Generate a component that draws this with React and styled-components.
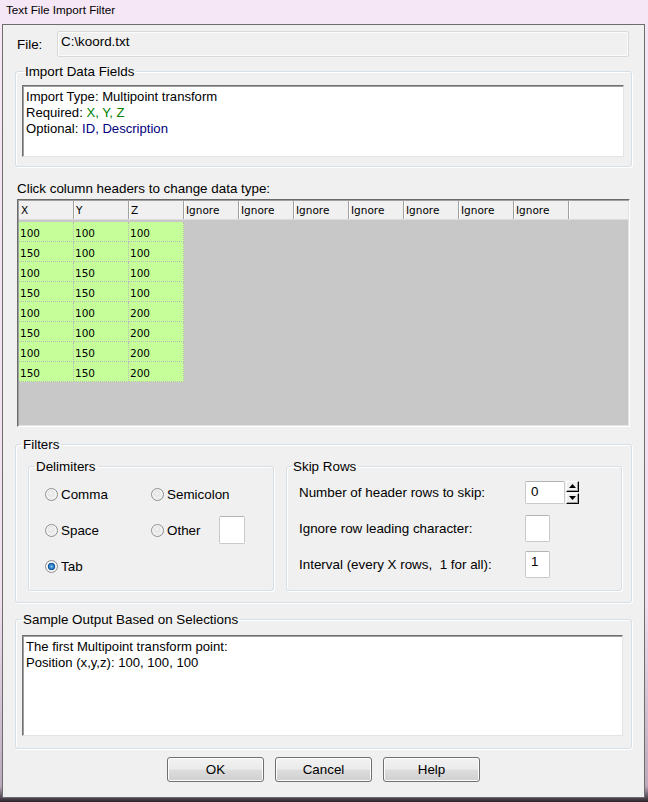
import React from 'react';
import styled, { createGlobalStyle } from 'styled-components';

const GlobalStyle = createGlobalStyle`
  html, body {
    margin: 0;
    padding: 0;
  }
  body {
    width: 648px;
    height: 802px;
    overflow: hidden;
    background: linear-gradient(to bottom, #f6e7f6 0%, #efdfef 75%, #bcaabc 98%, #2c242c 100%);
    font-family: "Liberation Sans", Arial, sans-serif;
    color: #000;
  }
`;

const Frame = styled.div`
  display: flex;
  flex-direction: column;
  padding-left: 2px;
`;

const TitleBar = styled.div`
  height: 24px;
  line-height: 20px;
  padding-left: 4px;
  font-size: 11.7px;
  color: #000;
`;

const Client = styled.div`
  box-sizing: border-box;
  width: 643px;
  height: 774px;
  border: 1px solid #6d6d6d;
  background: #f0f0f0;
  padding: 6px 12px 0 12px;
  display: flex;
  flex-direction: column;
  font-size: 13.4px;
`;

const FileRow = styled.div`
  display: flex;
  align-items: center;
  height: 26px;
`;

const FileLabel = styled.span`
  width: 40px;
  padding-left: 2px;
  padding-top: 1px;
`;

const FileBox = styled.div`
  box-sizing: border-box;
  width: 572px;
  height: 26px;
  border: 1px solid #d9d9d9;
  border-radius: 2px;
  box-shadow: inset 0 0 0 1px #fbfbfb;
  padding: 2px 3px;
  line-height: 15px;
  background: #f0f0f0;
`;

const GroupBox = styled.fieldset`
  margin: ${(p) => p.$mt || 0}px 0 0 0;
  padding: ${(p) => p.$pad};
  border: 1px solid #d5dfe5;
  border-radius: 3px;
  box-shadow: inset 1px 1px 0 #fff, 1px 1px 0 #fff;
  min-width: 0;
  width: ${(p) => (p.$w ? `${p.$w}px` : 'auto')};
  flex: ${(p) => (p.$grow ? '1' : 'none')};
  box-sizing: border-box;
`;

const Legend = styled.legend`
  padding: 0 2px;
  margin-left: ${(p) => p.$left}px;
  line-height: 15px;
  font-size: 13.4px;
`;

const SunkenText = styled.div`
  box-sizing: border-box;
  height: ${(p) => p.$h}px;
  background: #fff;
  border: 1px solid;
  border-color: #6f6f6f #e3e3e3 #e3e3e3 #6f6f6f;
  box-shadow: inset 1px 1px 0 #a0a0a0;
  padding: 3px 3px;
  line-height: 16px;
  font-size: 13.1px;
`;

const Green = styled.span`
  color: #008000;
`;

const Navy = styled.span`
  color: #000080;
`;

const Hint = styled.div`
  margin-top: 14px;
  padding-left: 2px;
  line-height: 15px;
`;

const DataGrid = styled.div`
  box-sizing: border-box;
  margin: 3px 0 0 2px;
  width: 613px;
  height: 228px;
  border: 1px solid;
  border-color: #6a6a6a #ffffff #ffffff #6a6a6a;
  box-shadow: inset 1px 1px 0 #a0a0a0, inset -1px -1px 0 #e3e3e3;
  background: #c8c8c8;
  padding: 1px 0 0 1px;
  font-family: "DejaVu Sans", Tahoma, sans-serif;
  font-size: 10.5px;
`;

const HeaderRow = styled.div`
  display: flex;
  height: 18px;
  background: #f0f0f0;
  border-bottom: 1px solid #dcdcdc;
  margin-right: 1px;
`;

const HeaderCell = styled.div`
  box-sizing: border-box;
  width: 55px;
  height: 18px;
  padding-left: 2px;
  line-height: 18px;
  border-right: 1px solid #a0a0a0;
  box-shadow: 1px 0 0 #fff;
`;

const DataRows = styled.div`
  display: flex;
  flex-direction: column;
  padding-top: 2px;
`;

const DataRow = styled.div`
  display: flex;
`;

const DataCell = styled.div`
  box-sizing: border-box;
  width: 55px;
  height: 20px;
  padding: 2px 0 0 1px;
  line-height: 18px;
  background: #c6ff99;
  border-right: 1px dotted #b9b9b9;
  border-bottom: 1px dotted #b9b9b9;
`;

const FilterRow = styled.div`
  display: flex;
  gap: 12px;
`;

const RadioGrid = styled.div`
  display: grid;
  grid-template-columns: 106px 68px 26px;
  grid-auto-rows: 36px;
  align-items: center;
`;

const Radio = styled.label`
  display: flex;
  align-items: center;
  gap: 3px;
  white-space: nowrap;
  grid-column: ${(p) => (p.$span ? `span ${p.$span}` : 'auto')};
`;

const RadioDot = styled.span`
  box-sizing: border-box;
  flex: none;
  width: 13px;
  height: 13px;
  border-radius: 50%;
  border: 1px solid #8e8f8f;
  background: ${(p) =>
    p.$on
      ? 'radial-gradient(circle at 50% 50%, #7cc6f3 0, #2a7cc4 2.2px, #0d4f96 3.4px, #e9e9e9 4px, #f4f4f4 5px, #d2d2d2 6px)'
      : 'radial-gradient(circle at 45% 40%, #f4f4f4 0, #e4e4e4 3px, #f6f6f6 4.5px, #d4d4d4 6px)'};
  box-shadow: inset 0 0 0 1px #f8f8f8;
`;

const SmallBox = styled.div`
  box-sizing: border-box;
  width: ${(p) => p.$w}px;
  height: ${(p) => p.$h}px;
  background: #fff;
  border: 1px solid #c9c9c9;
  border-top-color: #b3b3b3;
  border-radius: 2px;
  padding: 1px 0 0 5px;
  line-height: 18px;
  font-size: 13.4px;
`;

const SkipGrid = styled.div`
  display: grid;
  grid-template-columns: 226px auto;
  grid-auto-rows: 36px;
  align-items: center;
`;

const SpinWrap = styled.div`
  display: flex;
  align-items: center;
  gap: 1px;
`;

const SpinCol = styled.div`
  display: flex;
  flex-direction: column;
  gap: 1px;
`;

const SpinButton = styled.span`
  box-sizing: border-box;
  width: 13px;
  height: 11px;
  background: #f0f0f0;
  border: 1px solid;
  border-color: #fff #000 #000 #fff;
  box-shadow: inset -1px -1px 0 #a0a0a0;
  display: flex;
  align-items: center;
  justify-content: center;
`;

const ButtonRow = styled.div`
  display: flex;
  justify-content: center;
  gap: 11px;
  margin-top: 8px;
`;

const Button = styled.button`
  box-sizing: border-box;
  width: 97px;
  height: 25px;
  border: 1px solid #707070;
  border-radius: 3px;
  background: linear-gradient(to bottom, #f2f2f2 0%, #ebebeb 48%, #dddddd 52%, #cfcfcf 100%);
  box-shadow: inset 0 0 0 1px #fcfcfc;
  font-family: "Liberation Sans", Arial, sans-serif;
  font-size: 13.4px;
  color: #000;
  padding: 0;
`;

const Arrow = ({ up }) => (
  <svg width="7" height="4" viewBox="0 0 7 4">
    <polygon points={up ? '3.5,0 7,4 0,4' : '0,0 7,0 3.5,4'} fill="#000" />
  </svg>
);

const rows = [
  ['100', '100', '100'],
  ['150', '100', '100'],
  ['100', '150', '100'],
  ['150', '150', '100'],
  ['100', '100', '200'],
  ['150', '100', '200'],
  ['100', '150', '200'],
  ['150', '150', '200'],
];

const headers = ['X', 'Y', 'Z', 'Ignore', 'Ignore', 'Ignore', 'Ignore', 'Ignore', 'Ignore', 'Ignore'];

export default function App() {
  return (
    <>
      <GlobalStyle />
      <Frame>
        <TitleBar>Text File Import Filter</TitleBar>
        <Client>
          <FileRow>
            <FileLabel>File:</FileLabel>
            <FileBox>C:\koord.txt</FileBox>
          </FileRow>

          <GroupBox $mt={7} $pad="6px 7px 9px 6px">
            <Legend $left={1}>Import Data Fields</Legend>
            <SunkenText $h={72}>
              <div>Import Type: Multipoint transform</div>
              <div>
                Required: <Green>X, Y, Z</Green>
              </div>
              <div>
                Optional: <Navy>ID, Description</Navy>
              </div>
            </SunkenText>
          </GroupBox>

          <Hint>Click column headers to change data type:</Hint>
          <DataGrid>
            <HeaderRow>
              {headers.map((h, i) => (
                <HeaderCell key={i}>{h}</HeaderCell>
              ))}
            </HeaderRow>
            <DataRows>
              {rows.map((r, i) => (
                <DataRow key={i}>
                  {r.map((v, j) => (
                    <DataCell key={j}>{v}</DataCell>
                  ))}
                </DataRow>
              ))}
            </DataRows>
          </DataGrid>

          <GroupBox $mt={10} $pad="7px 9px 11px 12px">
            <Legend $left={-7}>Filters</Legend>
            <FilterRow>
              <GroupBox $w={246} $pad="2px 8px 6px 16px">
                <Legend $left={-11}>Delimiters</Legend>
                <RadioGrid>
                  <Radio>
                    <RadioDot />
                    Comma
                  </Radio>
                  <Radio $span={2}>
                    <RadioDot />
                    Semicolon
                  </Radio>
                  <Radio>
                    <RadioDot />
                    Space
                  </Radio>
                  <Radio>
                    <RadioDot />
                    Other
                  </Radio>
                  <SmallBox $w={26} $h={28} />
                  <Radio>
                    <RadioDot $on />
                    Tab
                  </Radio>
                </RadioGrid>
              </GroupBox>
              <GroupBox $grow $pad="0 8px 7px 12px">
                <Legend $left={-8}>Skip Rows</Legend>
                <SkipGrid>
                  <span>Number of header rows to skip:</span>
                  <SpinWrap>
                    <SmallBox $w={40} $h={23}>0</SmallBox>
                    <SpinCol>
                      <SpinButton>
                        <Arrow up />
                      </SpinButton>
                      <SpinButton>
                        <Arrow />
                      </SpinButton>
                    </SpinCol>
                  </SpinWrap>
                  <span>Ignore row leading character:</span>
                  <SmallBox $w={25} $h={27} />
                  <span>Interval (every X rows,&nbsp; 1 for all):</span>
                  <SmallBox $w={25} $h={27}>1</SmallBox>
                </SkipGrid>
              </GroupBox>
            </FilterRow>
          </GroupBox>

          <GroupBox $mt={9} $pad="8px 8px 12px 6px">
            <Legend $left={-1}>Sample Output Based on Selections</Legend>
            <SunkenText $h={101}>
              <div>The first Multipoint transform point:</div>
              <div>Position (x,y,z): 100, 100, 100</div>
            </SunkenText>
          </GroupBox>

          <ButtonRow>
            <Button>OK</Button>
            <Button>Cancel</Button>
            <Button>Help</Button>
          </ButtonRow>
        </Client>
      </Frame>
    </>
  );
}
